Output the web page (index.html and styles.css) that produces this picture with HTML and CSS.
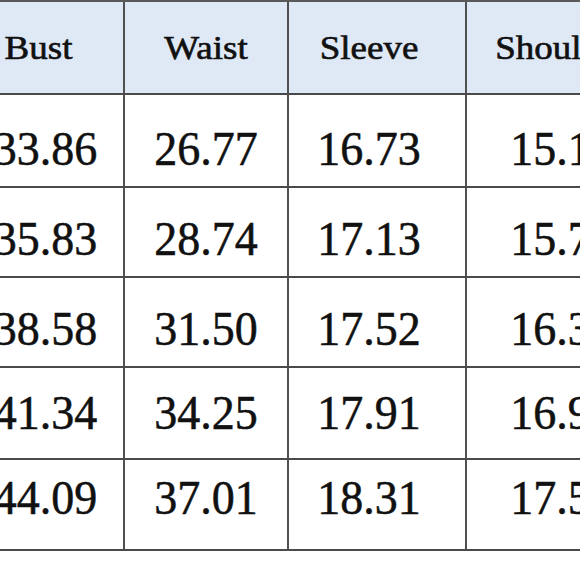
FILE: index.html
```html
<!DOCTYPE html>
<html>
<head>
<meta charset="utf-8">
<link rel="stylesheet" href="styles.css">
</head>
<body>
<div class="table">
  <div class="row head">
    <div class="cell c1"><span class="th">Bust</span></div>
    <div class="cell c2"><span class="th">Waist</span></div>
    <div class="cell c3"><span class="th">Sleeve</span></div>
    <div class="cell c4"><span class="th">Shoulder</span></div>
  </div>
  <div class="row r1">
    <div class="cell c1"><span class="td">33.86</span></div>
    <div class="cell c2"><span class="td">26.77</span></div>
    <div class="cell c3"><span class="td">16.73</span></div>
    <div class="cell c4"><span class="td">15.16</span></div>
  </div>
  <div class="row r2">
    <div class="cell c1"><span class="td">35.83</span></div>
    <div class="cell c2"><span class="td">28.74</span></div>
    <div class="cell c3"><span class="td">17.13</span></div>
    <div class="cell c4"><span class="td">15.75</span></div>
  </div>
  <div class="row r3">
    <div class="cell c1"><span class="td">38.58</span></div>
    <div class="cell c2"><span class="td">31.50</span></div>
    <div class="cell c3"><span class="td">17.52</span></div>
    <div class="cell c4"><span class="td">16.34</span></div>
  </div>
  <div class="row r4">
    <div class="cell c1"><span class="td">41.34</span></div>
    <div class="cell c2"><span class="td">34.25</span></div>
    <div class="cell c3"><span class="td">17.91</span></div>
    <div class="cell c4"><span class="td">16.93</span></div>
  </div>
  <div class="row r5">
    <div class="cell c1"><span class="td">44.09</span></div>
    <div class="cell c2"><span class="td">37.01</span></div>
    <div class="cell c3"><span class="td">18.31</span></div>
    <div class="cell c4"><span class="td">17.52</span></div>
  </div>
</div>
</body>
</html>
```
FILE: styles.css
```css
html, body {
  margin: 0;
  padding: 0;
  background: #ffffff;
  overflow: hidden;
}
body {
  width: 580px;
  height: 580px;
  font-family: "Liberation Serif", "Times New Roman", serif;
  color: #111111;
}
.table {
  margin-left: -38px;
  width: 720px;
  border-top: 2px solid #5a5a5a;
}
.row {
  display: flex;
  border-bottom: 2px solid #4a4a4a;
}
.head { height: 91px; background: #dfe9f6; }
.r1 { height: 91px; }
.r2 { height: 88px; }
.r3 { height: 88px; }
.r4 { height: 90px; }
.r5 { height: 89px; }
.cell {
  display: flex;
  align-items: center;
  justify-content: center;
  border-right: 2px solid #505050;
  flex: none;
  box-sizing: border-box;
}
.c1 { width: 163px; }
.c2 { width: 164px; }
.c3 { width: 178px; padding-right: 16px; }
.c4 { width: 192px; }
.head .c1 { padding-right: 8px; }
.row:not(.head) .c1 { padding-left: 6px; }
.th {
  display: inline-block;
  font-size: 37px;
  line-height: 1;
  -webkit-text-stroke: 0.7px #111111;
  transform: scaleY(0.93);
}
.td {
  display: inline-block;
  font-size: 46px;
  line-height: 1;
  -webkit-text-stroke: 0.5px #111111;
  transform: scaleY(1.06);
}
.r1 .td { margin-top: 17px; }
.r2 .td { margin-top: 13px; }
.r3 .td { margin-top: 13px; }
.r5 .td { margin-bottom: 14px; }
```
